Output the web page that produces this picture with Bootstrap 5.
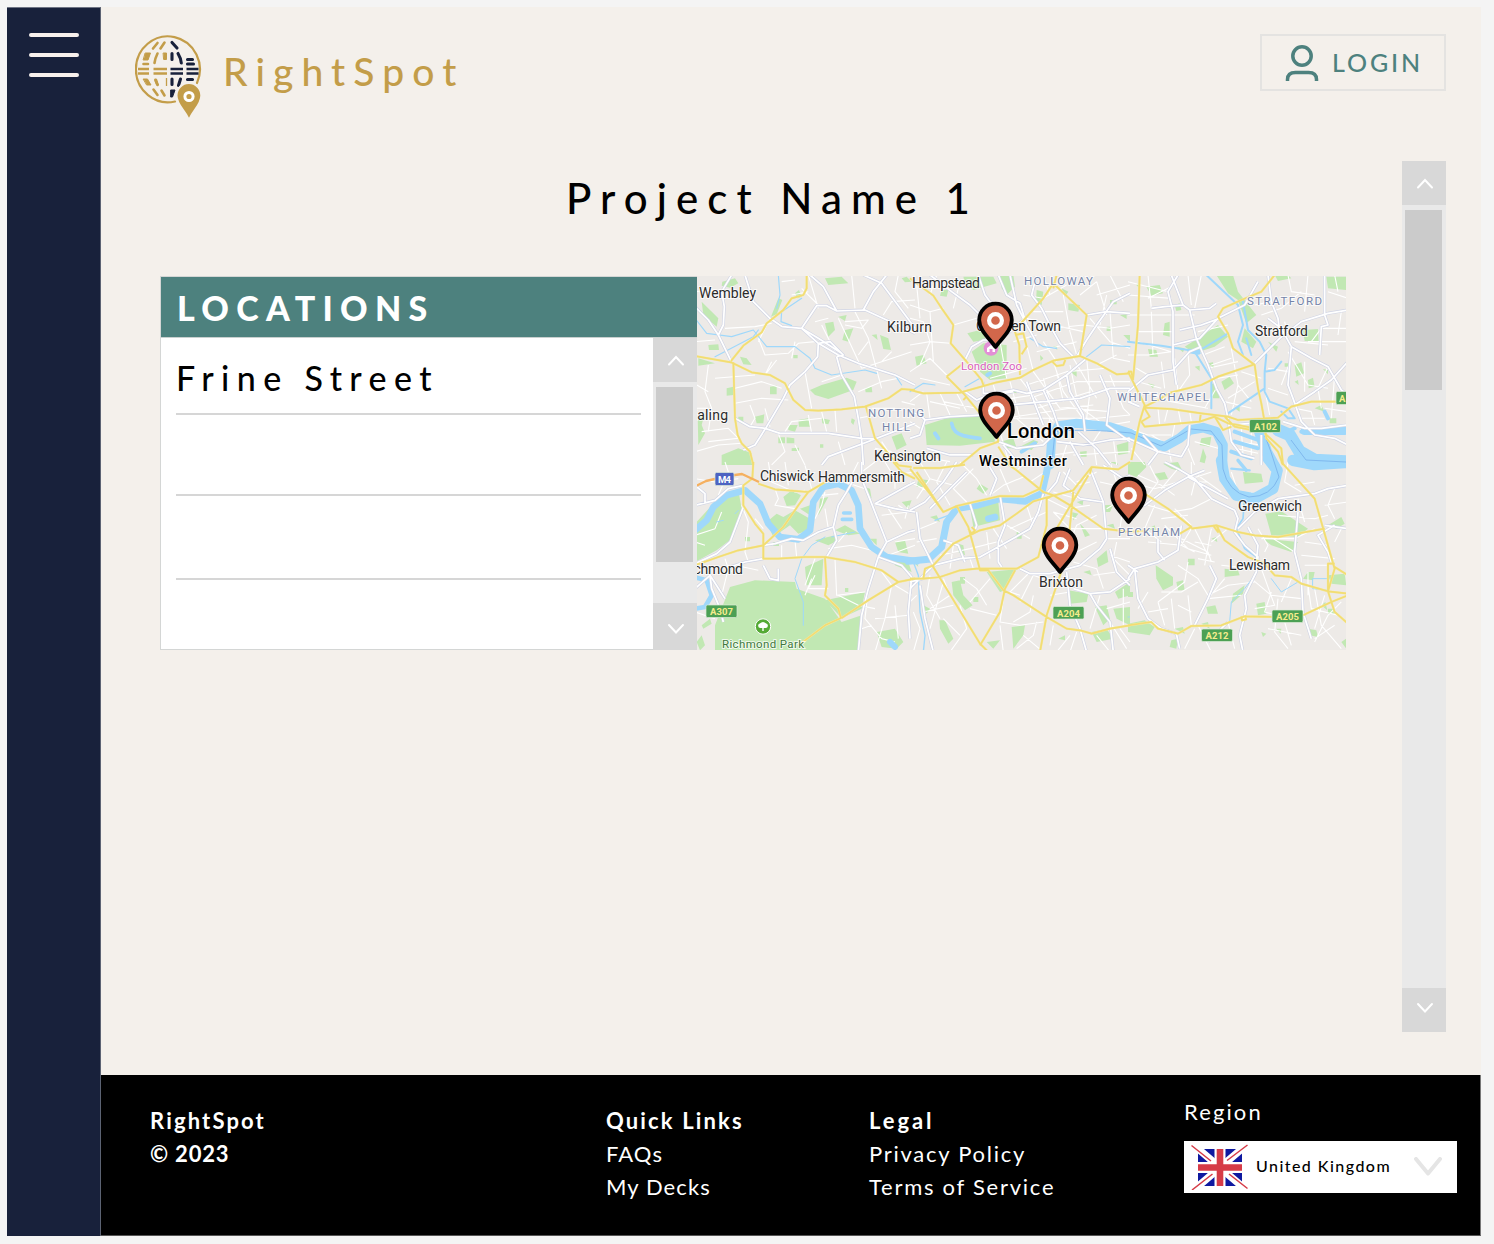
<!DOCTYPE html>
<html lang="en">
<head>
<meta charset="utf-8">
<meta name="viewport" content="width=device-width, initial-scale=1">
<title>RightSpot – Project Name 1</title>
<link rel="stylesheet" href="https://cdn.jsdelivr.net/npm/bootstrap@5.3.0/dist/css/bootstrap.min.css">
<style>
  body { background: #f4f4f4; font-family: Lato, "Liberation Sans", sans-serif; color: #000; }
  .app-frame { width: 1474px; height: 1229px; margin: 7px 0 0 7px; background: #f4f0eb; }
  .side-rail { width: 94px; background: #18213b; padding: 25px 22px; border-right: 1px solid #5c6373; border-top: 1px solid #6e7484; }
  .burger span { display: block; width: 50px; height: 4px; border-radius: 2px; background: #f7f0ec; margin-bottom: 16px; }
  .side-rail .btn { border: 0; }
  .main-col { width: 1380px; }
  .top-bar { height: 154px; padding: 27px 35px 0 34px; }
  .brand-globe { margin-top: -1px; }
  .brand-name { color: #c39d49; font-size: 39px; line-height: 48px; letter-spacing: 8.1px; margin: 13px 0 0 21px; font-weight: 500; }
  .login-btn { width: 186px; height: 57px; border: 2px solid #e4e3e1; border-radius: 0; color: #4d817e; font-size: 25px; letter-spacing: 2.9px; padding: 0 0 0 23px; font-weight: 500; }
  .login-text { margin-left: 13px; }
  .content-row { height: 914px; padding-right: 35px; }
  .work-area { width: 1245px; padding-left: 59px; }
  .page-title { font-size: 42px; line-height: 50px; letter-spacing: 9.05px; margin: 12px 0 0; padding-left: 406px; height: 103px; font-weight: 500; }
  .loc-panel { width: 537px; height: 374px; border: 1px solid #d4d6d5; border-right: 0; background: #fff; }
  .loc-head { height: 61px; background: #4d817e; color: #fff; font-size: 34px; line-height: 61px; letter-spacing: 7.3px; font-weight: 900; padding-left: 16px; margin: 0; border-bottom: 1px solid #c9d0cf; }
  .loc-list { width: 465px; margin-left: 15px; }
  .loc-list .loc-item { border-bottom: 2px solid #d6d6d6; font-size: 34px; letter-spacing: 7.4px; line-height: 40px; font-weight: 500; }
  .loc-item:nth-child(1) { height: 77px; padding-top: 20px; }
  .loc-item:nth-child(2) { height: 81px; }
  .loc-item:nth-child(3) { height: 84px; }
  .scroll-col { width: 44px; background: #e9e9e9; }
  .scroll-btn { height: 44px; background: #d8d8d8; padding-left: 1px; }
  .scroll-thumb { width: 37px; background: #cbcbcb; margin: 5px 0 0 3px; }
  .page-scroll { height: 871px; }
  .page-foot { height: 161px; background: #000; color: #fff; font-size: 22px; line-height: 33px; border-right: 1px solid #777; border-bottom: 1px solid #555; padding: 29px 23px 0 49px; }
  .page-foot a { color: #fff; text-decoration: none; }
  .foot-brand { width: 456px; } .foot-links { width: 263px; } .foot-legal { width: 315px; }
  .f-brand, .f-quick { letter-spacing: 2.15px; }
  .f-year { letter-spacing: .8px; }
  .f-faq, .f-decks { letter-spacing: 1.1px; }
  .f-legal { letter-spacing: 2.9px; }
  .f-priv, .f-terms { letter-spacing: 1.74px; }
  .f-region { letter-spacing: 2.1px; }
  .region-box { width: 273px; margin-top: -9px; }
  .region-select { height: 52px; background: #fff; color: #000; font-size: 16px; letter-spacing: 1.45px; margin-top: 13px; font-weight: 500; padding-left: 7px; }
  .f-uk { margin-left: 7px; margin-top: -3px; }
</style>
<script src="https://cdn.jsdelivr.net/npm/bootstrap@5.3.0/dist/js/bootstrap.bundle.min.js"></script>
</head>
<body>
<div class="app-frame d-flex">
  <nav class="side-rail flex-shrink-0">
    <button class="btn p-0 burger" aria-label="Menu"><span></span><span></span><span></span></button>
  </nav>
  <div class="main-col d-flex flex-column">
    <header class="top-bar d-flex justify-content-between align-items-start">
      <a class="d-flex text-decoration-none" href="#">
        <svg class="brand-globe" width="67" height="86" viewBox="135 34 67 86" fill="none" stroke-linecap="round">
          <path d="M175 102.500A32 33 0 1 1 197 84" stroke="#c39d49" stroke-width="2.200"/>
          <g stroke="#c39d49" stroke-width="2.600">
            <path d="M157.500 44l-4.500 5.500M164.500 43.500l-4 6M157.500 54.500q-2.500 5-3 9.500M153.500 90.500l4 5.500M161.500 91.500l3 5"/>
            <path d="M143.500 65h4.500M155.500 81.500l2 4.500" />
          </g>
          <g stroke="#c39d49" stroke-width="2.400" stroke-linecap="butt">
            <path d="M138 70h11M138 74.500h11M153.500 70h13.500M153.500 74.500h13.500"/>
            <path d="M166.500 79v8" stroke-width="1.300"/>
          </g>
          <path fill="#c39d49" stroke="#c39d49" stroke-width="1" stroke-linejoin="round" d="M145.500 54h5l-2.500 7h-4.500zM163.500 54h3v6.500h-2.500zM143.500 80h4l3.500 6h-4zM155 80h1.500l2 6h-1.500z"/>
          <g stroke="#18213b" stroke-width="3.100">
            <path d="M172 43.500l5 5.500M172 54.500v6M178 54.500q3 5 3.300 9.500M187.500 60.500h5M187.500 65h6M187.500 80.500h5M172 80v5.500M180.500 80l-2 6.500"/>
          </g>
          <g stroke="#18213b" stroke-width="2.700" stroke-linecap="butt"><path d="M170.500 70h12.500M170.500 74.500h12.500M186.500 70h12M186.500 74.500h12"/></g>
          <path fill="#18213b" stroke="#18213b" stroke-linejoin="round" d="M171 91h4l-2.500 7h-1.500z"/>
          <path fill="#c39d49" stroke="#f4f0eb" stroke-width="2" d="M189 121C185 111 176.500 106 176.500 96.500a12.400 12.400 0 0 1 24.800 0C201.300 106 193 111 189 121Z"/>
          <circle cx="189" cy="97.500" r="4.100" stroke="#fff" stroke-width="3"/>
        </svg>
        <span class="brand-name">RightSpot</span>
      </a>
      <button class="btn login-btn d-flex align-items-center">
        <svg width="34" height="38" viewBox="0 0 34 38" fill="none" stroke="#4d817e" stroke-width="3.500"><circle cx="17" cy="12" r="9.200"/><path d="M2.500 37v-1.500q0-7 8-7h13q8 0 8 7V37"/></svg>
        <span class="login-text">LOGIN</span>
      </button>
    </header>

    <div class="content-row d-flex justify-content-between">
      <main class="work-area">
        <h1 class="page-title">Project Name 1</h1>
        <div class="d-flex">
          <section class="loc-panel">
            <h2 class="loc-head">LOCATIONS</h2>
            <div class="d-flex justify-content-between">
              <div class="loc-list">
                <div class="loc-item">Frine Street</div>
                <div class="loc-item"></div>
                <div class="loc-item"></div>
              </div>
              <div class="scroll-col d-flex flex-column" style="height:312px">
                <div class="scroll-btn d-flex align-items-center justify-content-center"><svg width="18" height="12" viewBox="0 0 18 12"><path d="M2 10.500 9 3l7 7.500" fill="none" stroke="#fff" stroke-width="2" stroke-linecap="round"/></svg></div>
                <div class="scroll-thumb" style="height:175px"></div>
                <div class="scroll-btn d-flex align-items-center justify-content-center mt-auto pt-1" style="height:47px"><svg width="18" height="12" viewBox="0 0 18 12"><path d="M2 2l7 7.500L16 2" fill="none" stroke="#fff" stroke-width="2" stroke-linecap="round"/></svg></div>
              </div>
            </div>
          </section>
          <svg class="city-map" width="649" height="374" viewBox="697 276 649 374" role="img" aria-label="Map of London">
            <defs>
              <!-- main white streets, reused for casing and fill -->
              <g id="streets">
                <g transform="translate(695 275) scale(.3333)">
                  <path d="M0 95L40 135 70 180 108 258M110 0L80 50 88 95 85 150 70 180M150 0L175 80 225 130 262 155 320 160 370 205 430 240 490 265 600 300 660 330M320 160L365 92 395 92 425 108 510 105 575 135 660 175M345 0L385 35 425 108M505 0L560 25 660 160M575 0L535 50 505 105M370 205L405 200 445 240 425 245M370 205L368 245 330 290 285 330 265 370 215 455 180 510 145 525M425 245L440 300 478 365 490 430 500 495 505 570M120 430L165 455 210 460 255 475 400 475 500 490 540 492 660 445M380 570L400 545 540 492M320 160L370 190 440 235"/>
                </g>
                <g transform="translate(910 275) scale(.3333)">
                  <path d="M60 0L125 50 180 90 210 120M205 0L225 60 240 80 300 110M165 255L185 215 220 195 265 195 300 170 345 130M300 0L320 90 350 150 370 185 385 215M265 0L290 60 330 85 350 150M380 0L365 60 395 100 425 160 450 205 490 245M660 55L610 80 560 150 530 195 500 245M530 120L590 110 660 115M220 320L220 355 260 355 310 345 350 355 400 345 470 300 530 250M165 350L200 375 225 365 310 350M350 320L380 400 400 450M400 345L430 410 450 470M470 300L480 350 520 420 525 470M300 390L400 380 510 370 600 340 660 340M0 490L30 480 45 435 30 420 0 410M45 435L120 425 220 420M50 520L120 540 190 540M265 500L320 520 400 510 440 470M280 510L330 570M440 500L520 510 600 495 660 490M480 500L520 570M505 470L560 520 600 570M570 300L600 370 590 450 660 500"/>
                </g>
                <g transform="translate(1128 275) scale(.3333)">
                  <path d="M70 100L110 95 165 90 185 105 245 100 265 85M150 0L120 50 135 110 135 260 145 330M130 0L165 90M135 210L215 190 270 130 350 90 390 20M275 130L220 150 155 165M185 105L205 190 240 270 265 340 290 385 300 430M0 350L60 300 135 285 185 230 220 215M380 265L455 190 520 140 600 115 660 105M420 0L430 80 450 130 455 170M590 0L590 120 600 150 580 155 575 240M420 130L460 160 490 215 550 250 600 275 640 345 660 360M490 215L480 330 495 370 520 440 560 480 620 490 660 510M500 390L560 350 610 315 660 260M300 430L310 500 340 540 380 550M310 450L370 445M400 480L400 570M465 440L530 460 580 460 660 450M0 490L90 530 160 545 180 510 185 450M90 530L60 570M45 480L90 530M0 380L35 395"/>
                </g>
                <g transform="translate(695 462) scale(.3333)">
                  <path d="M0 130L60 115 100 80 145 70M0 70L30 95 30 125M145 135L105 240 65 275 0 305M205 250L240 245 290 230 325 235 370 210 415 195 430 130 455 90 480 45M395 285L425 235 415 195M500 0L500 50 530 125 575 240 550 285 520 380 500 460 490 570M540 125L600 140 660 150M575 240L640 210 660 205M540 125L640 70 660 60M550 285L620 310 650 345 640 450 645 530M205 290L150 300 105 315M0 380L45 340 50 380 75 440 85 480M205 310L225 350 250 355 250 320M45 340L90 410"/>
                </g>
                <g transform="translate(910 462) scale(.3333)">
                  <path d="M0 145L45 120 100 60 140 0M20 150L30 230 70 310 0 380M70 310L150 290 210 285 300 235 360 200 385 150 400 95M100 235L145 250 165 300M270 100L285 190 265 240 265 300 275 315M180 125L200 190 195 205M410 95L440 60 450 30M330 320L360 335 420 335 510 310 570 260 590 230 580 120 540 20M470 330L480 430 510 500 530 570M490 380L540 395 600 390 660 350M540 395L560 430 600 480 610 570M600 260L620 330 660 370M480 20L460 70 510 110 580 120M30 370L45 470 70 570M0 360L40 350M230 0L260 50 240 100M170 30L110 90 60 140M580 10L640 50 660 40"/>
                </g>
                <g transform="translate(1128 462) scale(.3333)">
                  <path d="M0 130L50 130 110 85 180 45 230 25M110 0L150 20 200 50 250 110 320 145 330 170 320 210 350 250 390 285 385 330 350 400 355 440 335 520 345 570M180 45L300 110M330 200L380 150 450 110 560 95 600 80 660 70M360 195L390 250 385 300M510 150L500 270 520 350 525 450 550 530M620 190L570 220 600 270 610 300M0 350L20 320 90 300 150 265 160 190M20 320L30 410 60 470 100 500 145 515M145 515L155 560M300 480L260 520 240 540M590 190L660 200M0 310L30 330M245 310L265 350 240 410 200 490M90 230L90 270 110 295"/>
                </g>
              </g>
              <!-- A-roads -->
              <g id="aroads">
                <g transform="translate(695 275) scale(.3333)">
                  <path d="M335 0L335 40 325 60 290 70 265 105 215 145 200 172 145 212 108 258M0 243L108 262 170 292 225 300 270 325 295 375 330 405 370 407 440 403 510 395 580 370 620 342 660 345M115 262L120 430 128 480 140 505 165 530 175 570M513 395L540 490 610 570"/>
                </g>
                <g transform="translate(910 275) scale(.3333)">
                  <path d="M0 10L70 62 95 100 130 150 122 205 170 260 215 315 222 335M0 345L40 355 150 353 260 322 330 308 370 285 430 257 510 243 530 120 430 25 400 70 315 165M440 0L430 40M510 243L560 265 620 298 660 295M315 170L328 210 330 300M315 180L340 175 350 215 335 238M110 305L160 265M110 305L160 355 210 415 260 470 265 500 210 520 150 570M265 515L300 570M425 258L440 273 460 270 466 255M160 375L170 365"/>
                </g>
                <g transform="translate(1128 275) scale(.3333)">
                  <path d="M35 0L30 150 15 315M440 0L400 50 340 75 285 100 270 125 300 175 315 220 380 270 390 340 400 385 408 430 415 490 450 530 465 570M380 268L270 305 220 330 130 352 90 375 50 395M0 290L15 320 50 390 35 440 10 555M50 398L130 402 220 415 300 425 330 435 450 428 490 395 550 380 660 380M40 440L65 425 50 400M40 440L50 455 215 440 260 425 300 445 330 450 430 470M215 440L218 420M260 425L285 465 310 455M0 290L10 290 15 315M290 425L320 455 370 465M410 475L460 520 465 570"/>
                </g>
                <g transform="translate(695 462) scale(.3333)">
                  <path d="M175 0L172 50 145 70 145 130 180 185 205 215 205 290 250 290 330 285 390 285 480 300 560 325 610 360 660 350M190 65L240 82 340 90 400 55M340 90L310 130 265 195 205 250 130 265 70 285 0 310M390 285L395 370 390 400 430 440 438 468 390 490 310 550M610 360L520 415 440 468M595 0L620 30 660 50M610 10L650 15"/>
                </g>
                <g transform="translate(910 462) scale(.3333)">
                  <path d="M0 20L60 95 100 150 140 132 270 102 340 103 390 80 400 40M10 18L90 18 165 8M20 30L100 150M285 0L320 25 400 90 430 100 480 130 580 200 660 210M0 350L40 350 45 320 70 310 130 245 180 220 210 205 270 190 320 155 370 118 415 105 490 85 545 15 625 22 660 0M40 350L90 345 150 325 200 320 320 320 385 285 410 190 410 110 430 100M68 312L210 545 235 570M140 132L175 195 205 305 210 325 235 325 280 385 310 400 410 465 470 500 510 505 545 515 600 500 660 490M315 325L285 380 270 450 210 550M535 40L410 250M490 90L478 210 470 280 410 460 390 570M545 15L540 35M175 200L185 215 195 205 185 195"/>
                </g>
                <g transform="translate(1128 462) scale(.3333)">
                  <path d="M50 95L120 140 190 195 155 215M0 210L60 205M190 200L265 190 330 210 380 220 450 225 590 200M265 190L290 235 360 285 410 305 440 340 490 345 520 365 600 388 620 320 560 110 460 0M600 388L600 305 620 305M620 315L660 340M600 388L660 395M600 388L620 450 660 485M660 400L610 420 525 460M440 465L350 463 280 490 190 492 150 515 90 500 70 480 0 490M255 190L270 210 270 195M340 463L342 475 354 472 352 460"/>
                </g>
              </g>
              <g id="pin">
                <path d="M0 26.500C-5 19-16.300 10-16.300-.500A16.300 16.300 0 0 1 16.300-.500C16.300 10 5 19 0 26.500Z" fill="#d2674b" stroke="#000" stroke-width="3.800" stroke-linejoin="round"/>
                <circle r="6.400" fill="none" stroke="#fff" stroke-width="4.200"/>
              </g>
            </defs>
            <rect x="697" y="276" width="649" height="375" fill="#edeae7"/>

            <!-- parks -->
            <g fill="#c1e8b3">
              <g transform="translate(695 275) scale(.3333)">
                <path d="M82 20L120 10 130 25 105 38 80 32ZM250 70L262 75 245 118 228 125ZM20 80L70 130 65 155 25 120ZM390 10L440 5 460 25 400 30ZM390 145L415 140 420 165 400 185ZM450 165L475 160 460 200 442 195ZM555 180L580 190 588 225 565 222ZM40 210L70 208 72 225 42 225ZM10 250L60 265 10 272ZM135 245L155 250 170 270 145 268ZM345 345L380 330 455 308 485 320 475 345 400 372 360 360ZM225 335L245 332 245 358 225 358ZM95 340L115 335 115 360 95 362ZM8 425L28 420 20 450 30 475 10 510ZM80 540L130 520 170 535 172 570 80 570ZM180 425L208 418 205 445 185 445ZM310 435L340 430 345 455 312 455ZM280 450L308 450 300 470 280 465ZM590 485L620 475 635 510 605 525ZM250 487L270 487 270 505 250 505ZM275 487L298 490 298 505 275 505ZM510 340L530 335 532 352 512 352ZM300 55L312 45 320 65 308 70ZM130 425L145 425 145 440 130 440ZM290 520L312 518 312 528 290 528ZM380 430L405 435 400 448 382 445ZM620 10L635 5 650 20 630 22ZM430 125L455 120 450 138ZM530 180L545 178 548 195ZM470 430L480 435 475 450 468 442ZM295 240H308V250H295ZM375 508H385V518H375Z"/>
              </g>
              <g transform="translate(910 275) scale(.3333)">
                <path d="M160 5L250 5 260 25 190 45 165 25ZM172 175L230 160 225 195 190 200ZM185 230L220 205 290 210 290 310 240 315 210 290ZM270 0L310 0 315 35 290 60 275 40ZM380 45L400 50 395 90 378 80ZM475 85L510 90 505 110 475 105ZM15 245L40 240 50 265 20 272ZM95 45H115L110 65 90 62ZM45 450L110 430 220 420 250 460 255 500 150 512 50 510ZM270 500L310 490 320 520 290 520ZM330 515L370 495 385 500 365 525ZM430 215L440 212 442 225ZM480 290L500 285 500 305ZM300 350L318 345 320 355ZM640 180L660 180V200ZM600 75H620V88H600ZM390 240L400 250 392 258ZM510 530L530 528 530 545 512 545ZM620 510L655 500 655 535 625 540ZM280 560L300 550 310 570ZM590 155H602V168H590ZM455 40L475 50 465 65ZM630 120L650 118V132Z"/>
              </g>
              <g transform="translate(1128 275) scale(.3333)">
                <path d="M55 35L95 30 105 55 70 62ZM265 0L315 0 330 50 385 120 355 145 330 75 300 55ZM595 5L655 5 655 45 600 40ZM170 215L210 190 270 150 300 185 260 215 200 235ZM110 145L125 140 125 185 105 180ZM525 165L570 162 572 198 530 198ZM500 270L520 262 528 295 505 305ZM280 320L305 305 318 325 290 345ZM540 315L555 308 560 335 542 340ZM60 222L85 225 90 245 65 245ZM250 325L265 330 275 370 255 370ZM220 490L250 485 245 515 215 510ZM225 520L235 545 230 565 215 560ZM145 215L170 220 165 232ZM350 160L385 200 375 220 340 200ZM560 400L580 390 590 410ZM440 0L480 0 490 10 450 18ZM140 90L155 85 160 105 145 108ZM500 320L510 315 512 330ZM130 490L150 485 150 505ZM25 30L30 25 35 40ZM200 275L215 272 215 288ZM585 282L600 285 600 298ZM605 430H625V445H605ZM240 265L255 262 258 280ZM420 200L450 215 445 230ZM470 265H480V275H470ZM320 400L335 395 335 410ZM60 325L80 330 75 340Z"/>
              </g>
              <g transform="translate(695 462) scale(.3333)">
                <path d="M0 185L60 120 130 85 140 140 110 230 65 265 0 300ZM265 105L290 85 318 100 300 130 275 132ZM215 180L245 155 265 165 300 145 345 170 340 205 310 215 285 190 235 225ZM105 375L180 355 300 360 305 380 390 410 440 480 500 460 490 570 60 570 60 490ZM330 315L385 290 380 370 335 370ZM390 415L510 390 500 440 440 468ZM315 140L345 130 345 160ZM375 110L400 105 370 160ZM420 205L450 190 495 215 460 220ZM600 240L630 235 640 275 610 270ZM590 280L640 300 650 330 600 310ZM545 510L600 500 625 540 605 560 560 555ZM5 540L20 520 30 550 15 565ZM525 230L545 230 545 250ZM20 490L45 470 50 485 25 500ZM510 75L525 80 530 110ZM360 235L420 220 430 235 400 250ZM450 378H460V390H450ZM620 120L650 115 640 140ZM150 225H165V238H150ZM235 240H252V252H235Z"/>
              </g>
              <g transform="translate(910 462) scale(.3333)">
                <path d="M180 135L265 120 270 175 190 195ZM230 330L320 322 285 385 270 390ZM475 385L535 395 530 420 480 425ZM125 360L150 355 160 400 188 430 165 445 130 400ZM88 475L105 475 130 530 115 545 90 500ZM305 495L345 490 340 520 310 560ZM560 290L590 265 595 300 565 315ZM590 190L610 185 615 200ZM615 390L660 360 660 400 625 410ZM555 435L590 430 600 470 580 490ZM25 50L55 55 50 75 20 75ZM210 65L235 80 220 95 200 80ZM610 440L660 435 660 490 620 470ZM485 150L505 155 490 175ZM600 0L620 0 625 10ZM545 510L590 500 610 530 560 540ZM145 245L160 250 165 280 145 270ZM60 165L80 160 90 180ZM510 185L525 200 540 220 525 225ZM520 330L540 325 545 340ZM500 120L520 115 518 130ZM580 130L610 128 600 150 580 150ZM190 405H205V420H190ZM230 540L270 535 250 560ZM10 300L20 295 25 315ZM320 210H335V230H320ZM150 345H165V365H150ZM445 530L465 520 465 535ZM40 430L60 440 50 455Z"/>
              </g>
              <g transform="translate(1128 462) scale(.3333)">
                <path d="M412 155L460 148 540 200 510 225 430 220ZM405 230L510 240 490 270 430 250ZM83 310L135 345 135 370 105 385 85 350ZM345 30L400 35 405 60 350 65ZM0 485L50 475 80 495 65 520 0 510ZM290 320L330 325 335 340 290 345ZM385 425L410 420 415 455 390 460ZM315 395L350 370 345 395 310 425ZM145 360L165 355 170 385 150 385ZM540 330L560 330 555 355 525 350ZM235 435L262 430 270 455 240 455ZM80 35L110 30 120 50 95 55ZM0 0L50 0 55 15 25 45 0 35ZM105 5L150 0 165 30 130 20ZM600 190L640 165 650 185 625 200ZM180 290H200V310H180ZM540 500L565 505 570 525 545 520ZM600 340L650 335 655 370 610 365ZM600 440H620V455H600ZM140 500L165 495 170 515ZM220 485L240 480 245 500ZM60 200L80 190 85 210ZM400 510L415 515 405 525ZM130 535L150 530 145 560 125 555ZM0 390H15V405H0ZM640 540L655 530V560ZM250 230L265 225 268 240ZM445 500L460 500 458 515ZM580 430L592 420 598 445Z"/>
              </g>
            </g>

            <!-- minor streets -->
            <g fill="none" stroke="#fff" stroke-width="3.300" stroke-linejoin="round">
              <g transform="translate(695 275) scale(.3333)">
                <path d="M0 50L60 45 85 60M90 160L180 155 230 145M40 270L30 350 50 400 40 470M60 310L180 300M0 200L60 195M190 190L210 240 280 235 310 205 360 200M120 385L200 370 280 375M165 390L180 430 165 455M245 255L210 300M290 250L300 200M330 290L350 400M380 150L420 230M430 130L500 280M480 110L520 190 560 340M500 280L560 260 650 230M450 140L520 135 500 160 450 150M565 120L590 80 660 75M520 200L490 240M590 230L560 260M440 300L380 320M490 350L560 320 610 310M530 400L600 400M250 475L270 530 230 570M380 410L395 470M420 405L425 470M340 420L350 475M20 470L100 460 130 490 40 500M0 530L70 510 140 505M300 510L330 570M430 500L450 570M290 60L340 50M225 130L190 200M370 100L340 0M260 20L300 15M470 0L480 100M610 0L600 50 640 100M320 40L370 90M360 140L400 130M210 400L225 455M270 470L290 440 380 430M5 330L40 350M620 380L660 390M560 500L600 560M120 340L200 320 260 340M490 430L540 420M230 260L210 300M0 400L40 400M540 520L590 530"/>
              </g>
              <g transform="translate(910 275) scale(.3333)">
                <path d="M0 90L60 110 100 100M0 130L40 140 60 200 30 270M0 210L60 200 120 205M20 30L30 130M60 110L70 260M150 20L130 100M130 150L200 130M80 0L60 60M0 290L60 250 110 300M30 310L120 330M270 200L290 310M310 200L380 180M350 130L430 150 520 170M340 60L400 70 470 30M460 60L480 170 500 240M400 0L420 60M430 160L520 150 600 160 660 150M540 130L600 200 660 220M400 200L440 260M380 230L500 200M560 20L590 120M600 0L640 80M560 60L660 30M510 60L560 20M600 110L610 250 660 260M530 250L540 350 530 430M560 270L620 240M600 300L640 400 660 420M330 310L430 440M370 290L450 400 550 390M430 260L460 350 540 460M490 250L560 370M350 330L470 290 590 280M360 370L500 320 660 320M380 400L540 350M250 330L280 430 350 420 480 400 600 410M300 320L330 430M240 380L370 360M310 430L440 430 560 430 660 420M400 310L420 380M440 290L460 380M480 270L505 390M500 390L570 440 610 470M0 380L40 350M50 355L60 430M90 355L120 420M140 355L170 410M0 440L30 460M100 380L200 400M60 380L150 400M0 560L60 550 120 560M260 440L300 570M320 430L400 500M330 470L450 460M340 500L410 470 420 430M550 500L590 440M470 510L450 570M550 500L560 570M610 490L620 570M490 540L660 530M430 540L500 530M520 430L600 450 660 440M360 540L380 570M590 60L570 150M240 310L350 280M345 190L370 290M460 110L370 110"/>
              </g>
              <g transform="translate(1128 275) scale(.3333)">
                <path d="M0 20L120 50M0 60L130 70M0 120L80 120 200 120M30 170L135 170M30 200L130 230M60 0L70 100M180 0L190 90M220 0L200 100M0 240L60 240 130 230M70 110L75 240M100 260L110 340M25 280L60 300M30 320L100 340M150 350L140 250M180 230L185 300 150 350M225 240L290 215M250 270L310 250M270 310L330 300M310 220L330 330 370 380M340 290L400 310M290 380L370 400M300 370L380 320M240 280L330 260M265 340L230 400M330 330L310 420M120 400L110 440M90 400L95 450M150 400L160 450M185 410L190 440M60 350L130 380 240 400M400 120L460 100 520 50M480 0L490 50 560 60M540 0L530 110M430 80L380 90M550 200L580 160 660 160M480 230L540 330 600 340M460 330L490 250M530 260L530 350M540 200L660 200M500 200L600 210M420 280L480 290M600 275L570 340 580 400M620 300L610 430M500 400L550 410 560 450M590 400L660 410M520 430L590 430M0 460L60 480 130 480M140 450L130 500M70 480L120 510 130 560M200 500L270 520M10 520L50 570M180 520L200 570M320 500L400 510M320 520L390 535M340 460L345 540M370 460L370 540M600 50L660 70M620 0L630 50M210 170L300 150M470 140L480 180M640 110L630 180M140 30L60 70M420 340L480 360M425 420L410 340"/>
              </g>
              <g transform="translate(695 462) scale(.3333)">
                <path d="M0 50L60 60 130 50M140 130L160 180 150 270 160 300M80 150L60 200 0 220M240 80L250 110 240 130 300 140 320 120M300 90L330 85M390 140L400 200M390 90L380 130 360 170M430 95L380 100M260 250L260 290M300 235L305 285M205 200L180 170M360 340L340 380 400 380M360 290L330 370M350 350L330 400M420 290L425 400 510 390M430 400L490 430 540 440M400 260L470 250 530 265M520 380L510 470 560 530 600 540M560 330L590 370 570 470 540 570M540 470L640 460M600 370L650 400M500 500L530 490M580 140L620 200M560 160L640 150 610 130M540 60L580 40 660 30M500 30L540 0M600 80L600 50 570 0M510 80L450 60M600 240L660 230M580 280L660 250M640 130L630 170M220 0L230 60 300 90M270 0L280 70M90 290L100 320 80 400M0 240L30 250M110 330L120 310 190 325M455 210L430 240M70 100L100 30 90 0M330 10L350 80M490 0L470 40M0 450L60 470M600 430L610 530"/>
              </g>
              <g transform="translate(910 462) scale(.3333)">
                <path d="M0 60L60 90M20 110L60 50 30 0M120 130L80 60 110 0M60 50L130 70M150 0L200 50 230 100M190 20L130 80 170 120M270 20L300 90M340 45L280 70 240 100M320 25L350 0M360 60L420 20M410 110L470 140 540 130M430 90L500 110M430 150L500 170M460 30L500 70 540 60M560 30L500 60M570 60L660 80M600 0L620 60M590 140L640 110 660 90M590 230L660 230M560 160L500 190 480 240M430 150L480 200 580 200M410 150L300 200M350 130L370 190M230 210L240 290M250 200L290 260M290 190L360 230M130 250L120 320M90 280L180 260 260 240M180 290L190 320M20 240L80 230M30 200L80 180M100 350L120 400 60 440M60 340L50 400 90 470M100 360L60 500M130 430L40 450M150 430L170 500 120 570M160 350L200 380 230 430M240 350L180 420M180 440L260 460M280 410L270 480 330 490 400 480M330 400L300 390 360 330M330 420L370 340 400 350M370 400L360 450 310 480M270 490L280 570M340 520L400 570M380 480L370 520 320 560M420 400L480 390M430 350L480 360M490 300L560 320 580 380M480 280L560 240M600 280L660 300M620 240L610 290 660 340M550 340L620 330M570 400L540 500M590 440L660 420M600 480L650 560M560 520L600 570M480 520L440 570M430 490L420 550M500 510L480 570M640 380L640 490M630 500L660 540M580 150L590 230M640 130L630 200M20 400L0 420M10 450L30 500 10 570M100 470L150 520"/>
              </g>
              <g transform="translate(1128 462) scale(.3333)">
                <path d="M0 60L80 80 150 60M30 40L100 70 140 100M60 0L90 60 60 100M150 20L100 80M190 0L190 50 250 30M210 40L280 90M190 100L200 60 240 60M60 130L130 150 190 140 250 110M140 140L190 190M100 170L180 160M80 130L50 200 100 240M190 200L160 250M60 240L160 250 200 270M160 230L240 270 250 300M110 190L180 260 250 280M200 200L240 280M250 200L230 310M210 290L260 300M200 240L250 250M300 200L250 240M180 300L170 360 90 420M100 390L160 390 210 360M150 310L210 350 240 400 300 370 380 360M280 310L370 320M240 410L290 350M240 410L340 400M180 400L190 490M60 390L30 440M90 420L110 490M130 410L140 500M120 440L60 450M150 430L190 450M200 500L170 560M210 490L250 570M300 480L320 560M370 350L430 400 520 410M400 320L440 430 380 440M430 390L410 450 450 460M490 350L460 420M450 410L440 510 480 560M420 500L520 520M470 480L490 550M540 370L550 440 630 460M560 380L580 490 640 560M590 400L560 500M520 280L620 290M400 230L500 230 560 200M420 220L500 270M450 160L560 170 600 160M390 200L420 250 410 270M510 110L530 180M560 60L500 70M480 0L470 60 520 90M620 80L600 130 620 170M590 130L660 120M640 200L620 240M530 240L600 250M530 310L600 310M370 90L410 140M640 420L600 460 560 540M540 330L540 400M620 490L560 530M310 30L330 90"/>
              </g>
            </g>

            <!-- rivers -->
            <g fill="none" stroke="#9fd8fb" stroke-linejoin="round" stroke-linecap="round">
              <g transform="translate(695 275) scale(.3333)" stroke-width="3.500">
                <path d="M0 130L35 175 110 185 175 165 215 215 300 215 345 250 360 280 410 300 510 285 545 295M250 0L255 60 245 100M190 165L175 185 60 245M320 70L260 110 258 140 290 152M600 300L620 330"/>
              </g>
              <g transform="translate(910 275) scale(.3333)" stroke-width="5">
                <path d="M360 190L400 215 440 220M530 245L575 210 660 215M210 310L165 335M0 350L40 325 75 330" stroke-width="3.500"/>
                <path d="M125 445Q130 475 160 482T210 490" stroke-width="11"/>
                <path d="M232 300L240 295M75 475L85 490M335 530L375 505" stroke-width="12"/>
                <path d="M420 570L425 490 445 452 500 445 600 455 660 475" stroke-width="27"/>
              </g>
              <g transform="translate(1128 275) scale(.3333)" stroke-width="6">
                <path d="M0 200L100 212 180 225 205 232 300 175M200 230L250 310 250 400M235 0L330 90 345 150 330 200 345 240M345 80L360 165 395 200 415 240 410 290 440 285 460 260M410 290L410 350 425 380 480 400 500 430 480 430 460 410M355 190L370 240M410 340L300 415M190 230L215 235"/>
                <path d="M185 228L210 232" stroke-width="14"/>
                <path d="M0 475L60 500 110 515 155 490 185 465 225 458 265 470 285 510 283 575" stroke-width="29"/>
                <path d="M395 470L415 530 440 575" stroke-width="34"/>
                <path d="M450 465L485 480 515 530 560 555 660 560" stroke-width="38"/>
                <path d="M520 470L660 472M320 470L390 495M320 500L390 520M470 475L500 460M590 410L600 430M310 530L370 550" stroke-width="12"/>
                <path d="M530 468H650" stroke-width="24"/>
              </g>
              <g transform="translate(695 462) scale(.3333)" stroke-width="4">
                <path d="M0 205L35 175 55 135 95 100 150 85 195 125 220 185 255 225 310 232 345 205 355 120 385 75 430 65 470 85 490 130 495 200 530 255 575 285 665 298" stroke-width="20"/>
                <path d="M-5 345L35 355 50 400 30 435 0 440" stroke-width="14"/>
                <path d="M390 225L350 250 320 290 300 350 325 420 325 490M480 210L410 225M120 155L130 145M65 180L85 175" stroke-width="3"/>
                <path d="M446 153H466M442 172H470" stroke-width="11"/>
                <path d="M585 540L600 555" stroke-width="18"/>
              </g>
              <g transform="translate(910 462) scale(.3333)" stroke-width="4">
                <path d="M-5 298L55 292 95 255 110 180 140 140 200 130 270 110 345 118 395 95 410 30 415 0" stroke-width="21"/>
                <path d="M235 170L255 165" stroke-width="20"/>
                <path d="M75 175L115 160M10 300L25 340 30 450 45 520 40 570"/>
              </g>
              <g transform="translate(1128 462) scale(.3333)" stroke-width="7">
                <path d="M280-5L290 50 325 100 380 110 435 80 448 25 420-10" stroke-width="33"/>
                <path d="M495-5L560 8 650 2" stroke-width="34"/>
                <path d="M350 105L345 170 325 200 350 260 385 285" stroke-width="5"/>
                <path d="M310 20L365 25"/>
                <path d="M380 340L350 380 310 420 305 480M430 350L460 390 510 360M555 350L600 350 600 385 555 380ZM0 465H4" stroke-width="3"/>
                <path d="M330-5L355 25" stroke-width="10"/>
              </g>
            </g>
            <g fill="none" stroke="#7fb8ee" stroke-width="1">
              <path d="M1052 462l3-30q24-4 76 1l30 13 30-17 20 2 11 14 1 24q5 23 26 28 22 0 30-20l-8-25-6-16M1291 440l15 20 40 2"/>
            </g>

            <g fill="none" stroke-linejoin="round">
              <use href="#streets" stroke="#d0d4e4" stroke-width="9"/>
              <use href="#streets" stroke="#fff" stroke-width="5.200"/>
              <use href="#aroads" stroke="#f5e9a9" stroke-width="7"/>
              <use href="#aroads" stroke="#f2dd73" stroke-width="5"/>
              <path d="M696 486l10-5 22-5 14-2 17 8" stroke="#f5b060" stroke-width="2.400"/>
            </g>

            <!-- place labels -->
            <g font-family="Roboto, sans-serif" font-size="14" fill="#2b2b2b" stroke="#fff" stroke-width="2" stroke-opacity=".75" paint-order="stroke">
              <text x="699" y="298" textLength="57">Wembley</text>
              <text x="912" y="288" textLength="68">Hampstead</text>
              <text x="887" y="332" textLength="45">Kilburn</text>
              <text x="976" y="331" textLength="85">Camden Town</text>
              <text x="1255" y="335.500" textLength="53">Stratford</text>
              <text x="689" y="419.500" textLength="39">Ealing</text>
              <text x="874" y="460.500" textLength="67">Kensington</text>
              <text x="760" y="480.500" textLength="54">Chiswick</text>
              <text x="818" y="481.500" textLength="87">Hammersmith</text>
              <text x="682" y="573.500" textLength="61">Richmond</text>
              <text x="1039" y="587" textLength="44">Brixton</text>
              <text x="1238" y="511" textLength="64">Greenwich</text>
              <text x="1229" y="570" textLength="61">Lewisham</text>
              <g fill="#000"><text x="1007" y="437.500" font-size="20" font-weight="500" textLength="68">London</text>
              <text x="979" y="465.500" font-size="14.500" font-weight="500" textLength="88">Westminster</text></g>
              <g font-size="11.500" fill="#7584a8">
                <text x="1024" y="285" textLength="69">HOLLOWAY</text>
                <text x="1247" y="304.500" textLength="75">STRATFORD</text>
                <text x="1117" y="401" textLength="92">WHITECHAPEL</text>
                <text x="868" y="416.500" textLength="56">NOTTING</text>
                <text x="882" y="430.500" textLength="28">HILL</text>
                <text x="1118" y="536" textLength="62">PECKHAM</text>
              </g>
              <text x="961" y="369.500" font-size="11.500" fill="#d95fbd" textLength="61">London Zoo</text>
              <text x="722" y="647.500" font-size="11.500" fill="#41793c" textLength="82">Richmond Park</text>
            </g>
            <circle cx="991" cy="348.500" r="7.300" fill="#e38fd6"/><path d="M987 352v-4l4-3 4 3v4h-2.500v-3h-3v3z" fill="#fff"/>
            <circle cx="763" cy="626.500" r="7.700" fill="#54aa35" stroke="#fff"/><path d="M762.300 631v-3h-2a2.300 2.300 0 0 1-.500-4.500q3.200-3 6.400 0a2.300 2.300 0 0 1-.500 4.500h-2v3z" fill="#fff"/>

            <!-- road shields -->
            <g fill="#4ca054" stroke="#dcebd8" stroke-width=".7">
              <rect x="706" y="605" width="31" height="12.500" rx="1.500"/><rect x="1249.500" y="419.500" width="31" height="13" rx="1.500"/><rect x="1336" y="391.500" width="14" height="13" rx="1.500"/><rect x="1053" y="606.500" width="31" height="12.500" rx="1.500"/><rect x="1272" y="610" width="31" height="12.500" rx="1.500"/><rect x="1201.500" y="629" width="31" height="12.500" rx="1.500"/>
              <rect x="715" y="472.500" width="19" height="13" rx="1.500" fill="#4d63c2"/>
            </g>
            <g font-family="Roboto, sans-serif" font-size="9.500" font-weight="700" fill="#f5ec8d">
              <text x="710" y="614.500" textLength="23">A307</text><text x="1254" y="429.500" textLength="23">A102</text><text x="1339" y="401.500">A</text><text x="1057" y="616.500" textLength="23">A204</text><text x="1276" y="620" textLength="23">A205</text><text x="1205.500" y="639" textLength="23">A212</text>
              <text x="718" y="482.500" fill="#fff" textLength="13">M4</text>
            </g>
            <use href="#pin" x="995.500" y="320.500"/><use href="#pin" x="996.500" y="410.500"/><use href="#pin" x="1128.500" y="495.500"/><use href="#pin" x="1060" y="545.500"/>
          </svg>
        </div>
      </main>
      <div class="scroll-col page-scroll d-flex flex-column">
        <div class="scroll-btn d-flex align-items-center justify-content-center"><svg width="18" height="12" viewBox="0 0 18 12"><path d="M2 10.500 9 3l7 7.500" fill="none" stroke="#fff" stroke-width="2" stroke-linecap="round"/></svg></div>
        <div class="scroll-thumb" style="height:180px"></div>
        <div class="scroll-btn d-flex align-items-center justify-content-center mt-auto pb-1"><svg width="18" height="12" viewBox="0 0 18 12"><path d="M2 2l7 7.500L16 2" fill="none" stroke="#fff" stroke-width="2" stroke-linecap="round"/></svg></div>
      </div>
    </div>

    <footer class="page-foot d-flex">
      <div class="foot-brand fw-bold"><div class="f-brand">RightSpot</div><div class="f-year">© 2023</div></div>
      <div class="foot-links"><div class="fw-bold f-quick">Quick Links</div><a class="d-block f-faq" href="#">FAQs</a><a class="d-block f-decks" href="#">My Decks</a></div>
      <div class="foot-legal"><div class="fw-bold f-legal">Legal</div><a class="d-block f-priv" href="#">Privacy Policy</a><a class="d-block f-terms" href="#">Terms of Service</a></div>
      <div class="region-box flex-shrink-0">
        <div class="f-region">Region</div>
        <div class="region-select d-flex align-items-center">
          <svg width="58" height="46" viewBox="1191 1144 58 46">
            <path fill="#0f19a0" d="M1198 1149h44v37h-44z"/>
            <path d="M1196 1147l48 41M1244 1147l-48 41" stroke="#fff" stroke-width="7.500"/>
            <path d="M1191.500 1145.500l19.500 15.500M1247.500 1145l-20.500 15.500M1192 1190l20.500-16M1247.500 1188.500l-18.500-14.500" stroke="#d63b47" stroke-width="1.500"/>
            <path d="M1220 1149v37M1198 1167.500h44" stroke="#fff" stroke-width="11"/>
            <path d="M1220 1149v37M1198 1167.500h44" stroke="#d63b47" stroke-width="6.600"/>
          </svg>
          <span class="f-uk">United Kingdom</span>
          <svg class="ms-auto" style="margin-right:15px" width="28" height="20" viewBox="0 0 28 20"><path d="M2 2l12 14.500L26 2" fill="none" stroke="#e5e5e5" stroke-width="4" stroke-linecap="round" stroke-linejoin="round"/></svg>
        </div>
      </div>
    </footer>
  </div>
</div>
</body>
</html>
